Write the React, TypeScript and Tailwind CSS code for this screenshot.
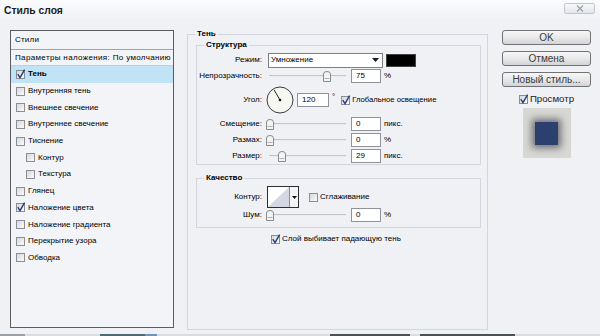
import React from "react";

function Check({ checked = false }: { checked?: boolean }) {
  return (
    <span className="relative inline-block w-[9px] h-[9px] shrink-0 border border-[#8c8e93] bg-linear-to-br from-[#d6d8dd] to-[#fbfbfc]">
      {checked && (
        <svg viewBox="0 0 10 10" className="absolute left-[-1px] top-[-2px] w-[10px] h-[10px]">
          <path d="M1.8 5.2 L4 8.6 L8.6 0.6" fill="none" stroke="#2b3c7c" strokeWidth="1.4" />
        </svg>
      )}
    </span>
  );
}

function Slider({ thumb }: { thumb: number }) {
  return (
    <div className="relative w-[80px] h-[14px] shrink-0">
      <div className="absolute left-[3px] right-0 top-[6px] h-[2px] bg-[#c2c4c9] border-b border-[#ebecef]" />
      <svg className="absolute top-[2px]" style={{ left: thumb }} width="8" height="11" viewBox="0 0 8 11">
        <path d="M0.5 3 Q0.5 0.5 4 0.5 Q7.5 0.5 7.5 3 V10.5 H0.5 Z" fill="#f3f3f3" stroke="#8a8a8a" />
        <line x1="1.5" y1="7.5" x2="6.5" y2="7.5" stroke="#b4b4b4" />
      </svg>
    </div>
  );
}

function Num({ v, w = "w-[30px]" }: { v: string; w?: string }) {
  return (
    <div className={`${w} h-[14px] shrink-0 border border-[#8e939b] bg-white pl-[4px] text-[8px] leading-[12px]`}>{v}</div>
  );
}

function Label({ children }: { children: React.ReactNode }) {
  return <div className="w-[65px] shrink-0 text-right text-[8px] leading-[10px] whitespace-nowrap">{children}</div>;
}

function SliderRow({ label, thumb, value, unit }: { label: string; thumb: number; value: string; unit: string }) {
  return (
    <div className="flex items-center h-[16px]">
      <Label>{label}</Label>
      <div className="ml-[4px]">
        <Slider thumb={thumb} />
      </div>
      <div className="ml-[5px]">
        <Num v={value} />
      </div>
      <div className="ml-[3px] text-[8px] leading-[10px]">{unit}</div>
    </div>
  );
}

function Group({ title, className = "", children }: { title: string; className?: string; children: React.ReactNode }) {
  return (
    <div className={`relative border border-[#d3d6de] ${className}`}>
      <span className="absolute top-[-6px] left-[7px] px-[2px] bg-[#eff1f5] text-[8px] leading-[10px] font-bold">{title}</span>
      {children}
    </div>
  );
}

const listItems: { t: string; c?: boolean; ind?: boolean }[] = [
  { t: "Внутренняя тень" },
  { t: "Внешнее свечение" },
  { t: "Внутреннее свечение" },
  { t: "Тиснение" },
  { t: "Контур", ind: true },
  { t: "Текстура", ind: true },
  { t: "Глянец" },
  { t: "Наложение цвета", c: true },
  { t: "Наложение градиента" },
  { t: "Перекрытие узора" },
  { t: "Обводка" },
];

export default function App() {
  return (
    <div className="w-[600px] h-[336px] bg-[#eff1f5] flex flex-col overflow-hidden text-black font-['Liberation_Sans',Arial,sans-serif]">
      {/* title bar */}
      <div className="h-[22px] flex items-start bg-linear-to-b from-[#fbfcfe] to-[#eef0f5]">
        <div className="pl-[4px] h-[22px] flex items-center text-[10.3px] font-bold text-[#1a1a1a]">Стиль слоя</div>
        <div className="ml-auto mr-[5px] mt-[3px] w-[31px] h-[11px] rounded-[2px] border border-[#c2c6ce] bg-linear-to-b from-[#f7f8fa] to-[#e3e6ec] flex items-center justify-center">
          <svg width="8" height="7" viewBox="0 0 8 7">
            <path d="M1 0.5 L7 6.5 M7 0.5 L1 6.5" stroke="#9a9fa8" strokeWidth="1.2" />
          </svg>
        </div>
      </div>

      <div className="flex flex-1 pl-[10px] pt-[8px]">
        {/* left list */}
        <div className="w-[164px] h-[298px] border border-[#5c5d60] bg-[#f3f4f8] flex flex-col text-[8px] leading-[10px]">
          <div className="h-[19px] border-b border-[#9ea1a8] flex items-center pl-[4px] tracking-[0.2px]">Стили</div>
          <div className="h-[16px] border-b border-[#c9ccd3] flex items-center pl-[4px] whitespace-nowrap tracking-[0.35px]">Параметры наложения: По умолчанию</div>
          <div className="h-[16.7px] bg-[#c0e3f6] flex items-center pl-[5px]">
            <Check checked />
            <span className="ml-[3px] font-bold">Тень</span>
          </div>
          {listItems.map((it) => (
            <div key={it.t} className={`h-[16.7px] flex items-center ${it.ind ? "pl-[15px]" : "pl-[5px]"}`}>
              <Check checked={it.c} />
              <span className="ml-[3px]">{it.t}</span>
            </div>
          ))}
        </div>

        {/* main group */}
        <Group title="Тень" className="ml-[13px] mt-[4px] w-[301px] h-[296px]">
          <Group title="Структура" className="ml-[8px] mt-[10px] w-[285px] pt-[6px]">
            <div className="flex items-center h-[16px]">
              <Label>Режим:</Label>
              <div className="ml-[6px] w-[115px] h-[15px] border border-[#7c7f85] bg-white flex items-center pl-[2px] text-[8px] leading-[10px]">
                <span>Умножение</span>
                <svg className="ml-auto mr-[3px]" width="7" height="4" viewBox="0 0 7 4">
                  <path d="M0 0 H7 L3.5 4 Z" fill="#1a1a2e" />
                </svg>
              </div>
              <div className="ml-[3px] w-[30px] h-[13px] bg-black border border-[#444]" />
            </div>
            <SliderRow label="Непрозрачность:" thumb={57} value="75" unit="%" />
            <div className="flex items-center h-[32px]">
              <Label>Угол:</Label>
              <svg className="ml-[4px] shrink-0" width="28" height="28" viewBox="0 0 28 28">
                <circle cx="14" cy="14" r="13" fill="#f7f7f2" stroke="#3a3b40" strokeWidth="1" />
                <line x1="14" y1="14" x2="8" y2="3.8" stroke="#222" strokeWidth="1" />
                <circle cx="14" cy="14" r="1.3" fill="#111" />
              </svg>
              <div className="ml-[3px]">
                <Num v="120" w="w-[32px]" />
              </div>
              <div className="ml-[3px] self-start mt-[8px] text-[8px] leading-[10px]">°</div>
              <div className="ml-[6px] flex items-center">
                <Check checked />
                <span className="ml-[2px] text-[7.7px] leading-[10px]">Глобальное освещение</span>
              </div>
            </div>
            <SliderRow label="Смещение:" thumb={0} value="0" unit="пикс." />
            <SliderRow label="Размах:" thumb={0} value="0" unit="%" />
            <SliderRow label="Размер:" thumb={12} value="29" unit="пикс." />
          </Group>

          <Group title="Качество" className="ml-[8px] mt-[13px] w-[285px] pt-[7px] pb-[5px]">
            <div className="flex items-center h-[22px]">
              <Label>Контур:</Label>
              <div className="ml-[5px] flex h-[22px] border border-[#2e2f33]">
                <svg width="21" height="20" viewBox="0 0 21 20">
                  <rect x="0" y="0" width="21" height="20" fill="#ffffff" />
                  <path d="M0 20 L21 0 V20 Z" fill="#d5d8e3" />
                </svg>
                <div className="w-[9px] border-l border-[#8b8e95] bg-[#f4f4f6] flex items-center justify-center">
                  <svg width="5" height="3" viewBox="0 0 5 3">
                    <path d="M0 0 H5 L2.5 3 Z" fill="#111" />
                  </svg>
                </div>
              </div>
              <div className="ml-[10px] flex items-center">
                <Check />
                <span className="ml-[2px] text-[8px] leading-[10px]">Сглаживание</span>
              </div>
            </div>
            <div className="flex items-center h-[14px]">
              <Label>Шум:</Label>
              <div className="ml-[4px]">
                <Slider thumb={0} />
              </div>
              <div className="ml-[5px]">
                <Num v="0" />
              </div>
              <div className="ml-[3px] text-[8px] leading-[10px]">%</div>
            </div>
          </Group>

          <div className="ml-[83px] mt-[3px] h-[16px] flex items-center">
            <Check checked />
            <span className="ml-[2px] text-[8px] leading-[10px]">Слой выбивает падающую тень</span>
          </div>
        </Group>

        {/* right column */}
        <div className="ml-[14px] w-[89px] flex flex-col">
          {["OK", "Отмена", "Новый стиль..."].map((b, i) => (
            <button
              key={b}
              className={`w-[89px] h-[15px] rounded-[3px] border border-[#707276] bg-linear-to-b from-[#f7f7f7] via-[#e9e9ea] to-[#d3d4d6] text-[10px] leading-[13px] text-[#3a3a3a] ${i > 0 ? "mt-[6px]" : ""}`}
            >
              {b}
            </button>
          ))}
          <div className="mt-[6px] h-[12px] flex items-center justify-center">
            <Check checked />
            <span className="ml-[2px] text-[9.7px] leading-[12px] text-[#222]">Просмотр</span>
          </div>
          <div className="mt-[3px] mx-auto w-[48px] h-[50px] bg-[#d7d7d3] flex items-center justify-center">
            <div className="w-[23px] h-[23px] bg-[#2c4070] shadow-[0_0_7px_3px_rgba(25,28,40,0.55)]" />
          </div>
        </div>
      </div>

      <div className="h-[2px] flex bg-[#d9dce1]">
        <div className="w-[25px] bg-[#9aa0a8]" />
        <div className="w-[75px]" />
        <div className="w-[45px] bg-[#4f6a72]" />
        <div className="w-[12px] bg-[#6b94be]" />
        <div className="w-[173px]" />
        <div className="w-[80px] bg-[#4a5256]" />
        <div className="w-[10px]" />
        <div className="w-[95px] bg-[#4a5256]" />
      </div>
    </div>
  );
}
